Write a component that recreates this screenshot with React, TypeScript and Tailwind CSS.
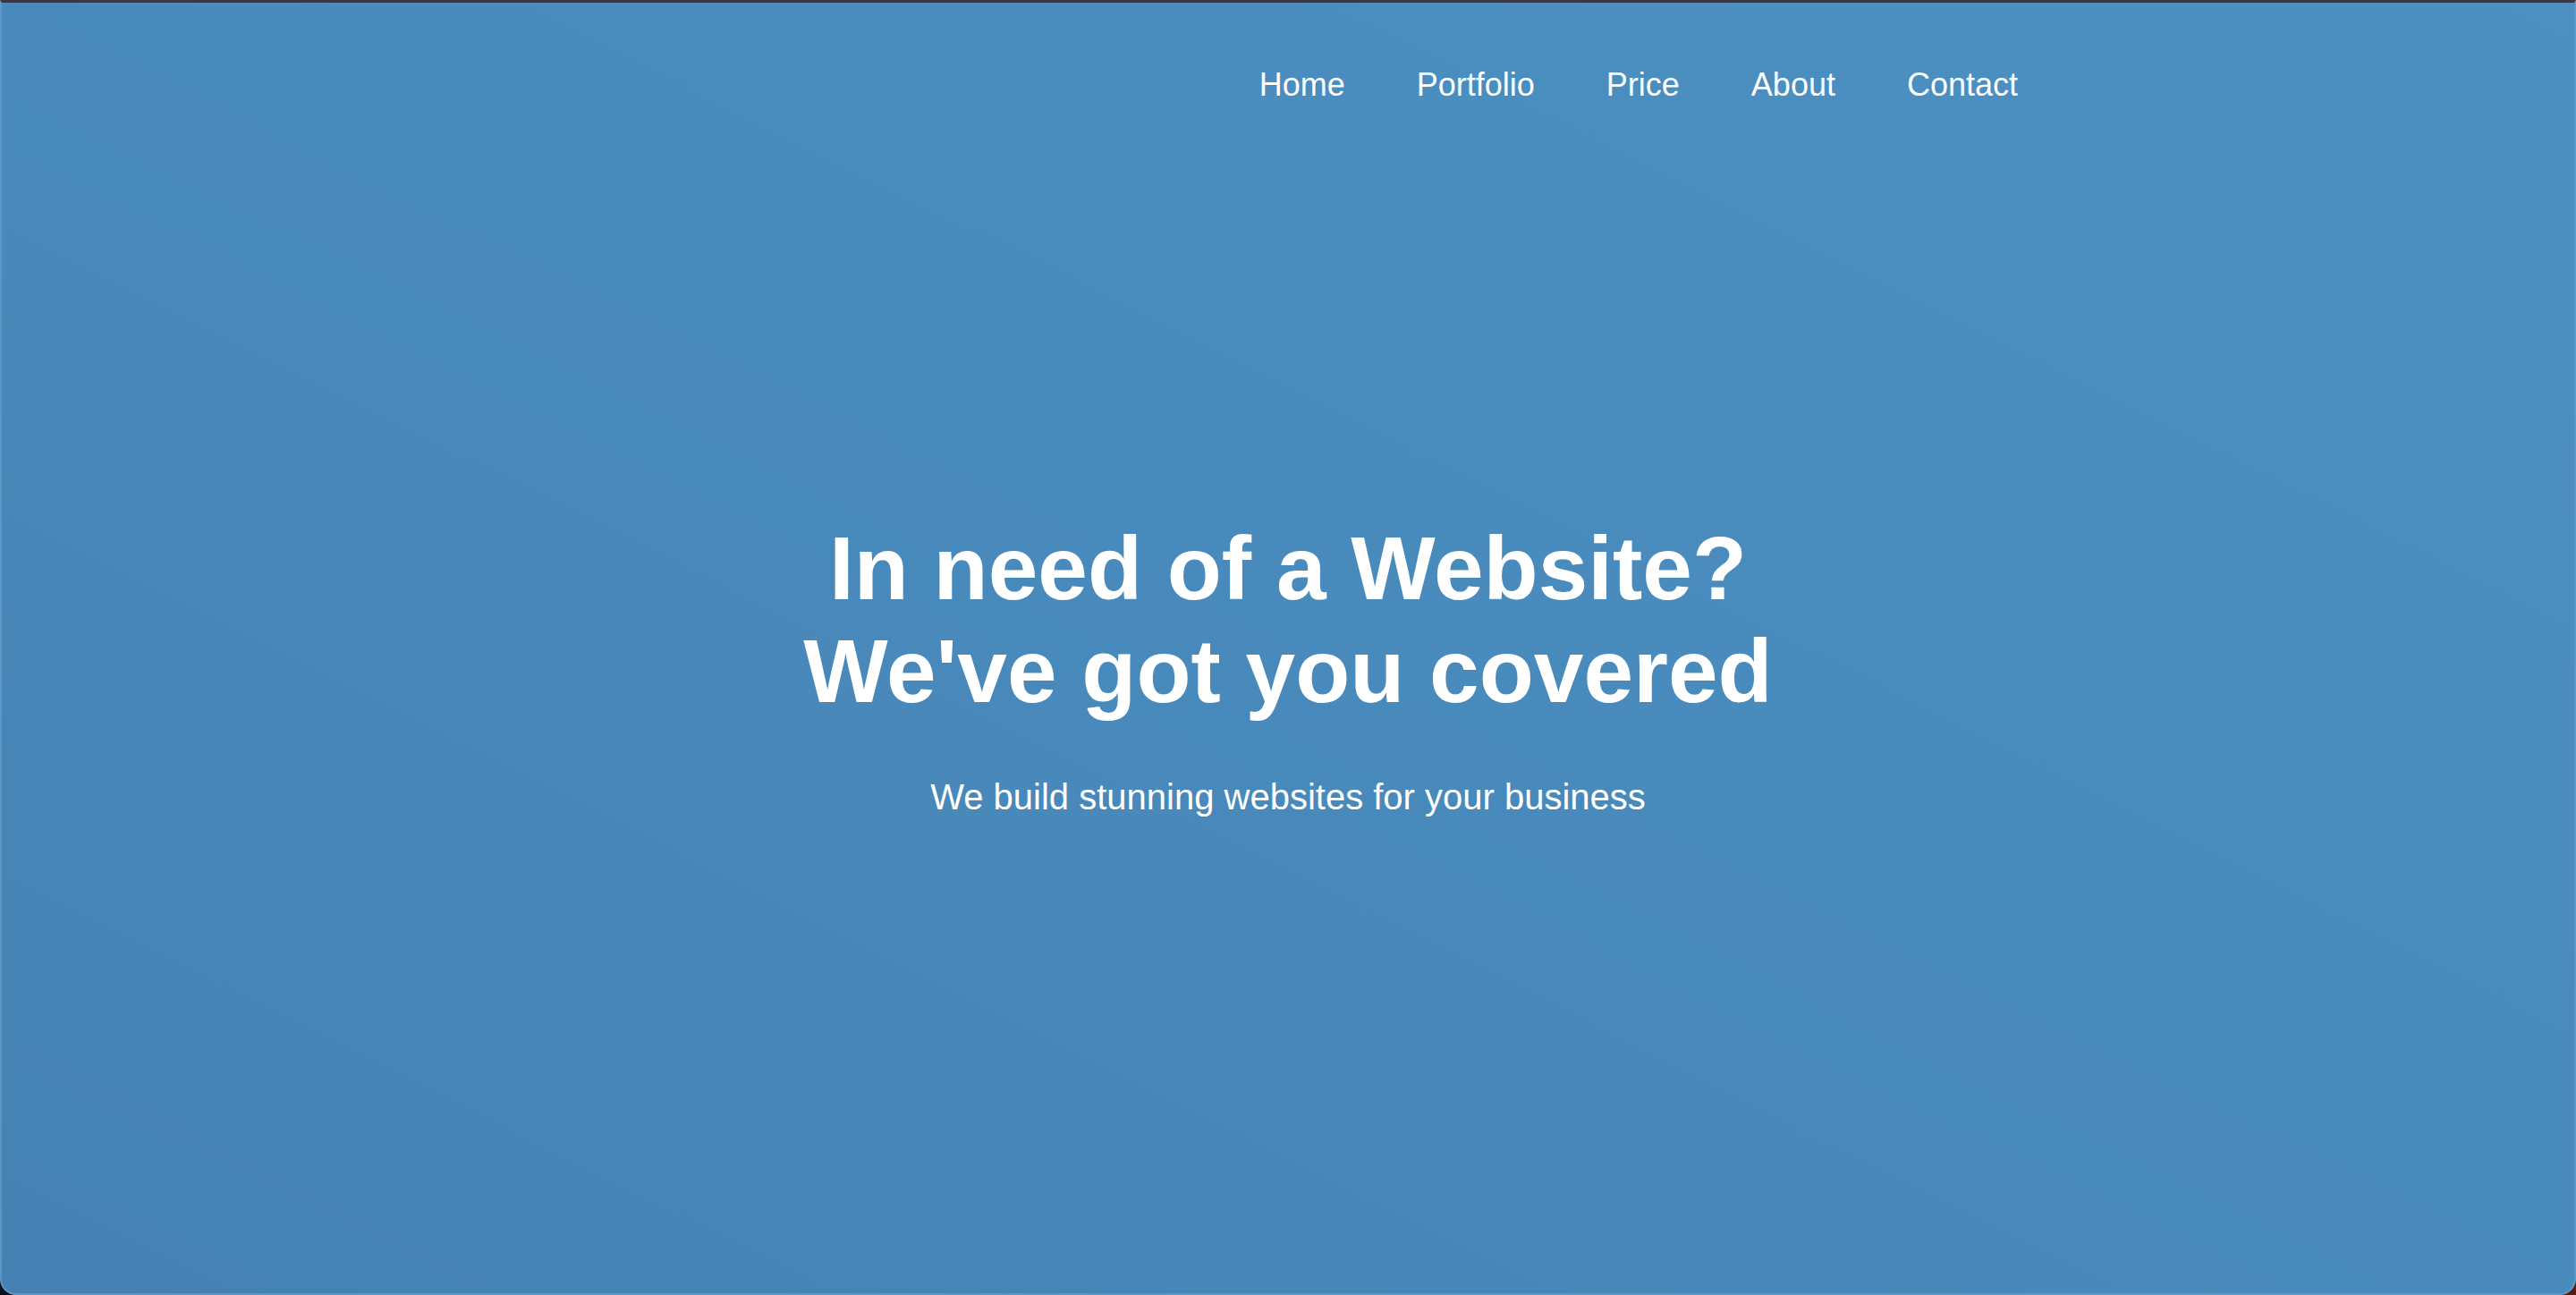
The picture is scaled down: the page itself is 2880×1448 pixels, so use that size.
import React from "react";

const links = ["Home", "Portfolio", "Price", "About", "Contact"];

const App = () => {
  return (
    <div className="w-full h-[1448px] bg-gradient-to-r from-[#08121d] to-[#5a1c10] font-['Liberation_Sans',Arial,sans-serif]">
      {/* window */}
      <div className="h-[1448px] flex flex-col rounded-b-[18px] bg-gradient-to-tr from-[#4582b3] via-[#498abc] to-[#4c90c2] border-t-[3px] border-t-[#363847] border-x-2 border-b-2 border-x-[#5e97c6] border-b-[#5e97c6]">
        {/* nav */}
        <div className="w-[1632px] mx-auto flex justify-end gap-[80px] pt-[71px]">
          {links.map((l) => (
            <a key={l} href="#" className="text-white text-[36px] leading-[41px]">
              {l}
            </a>
          ))}
        </div>

        {/* hero */}
        <div className="mt-[463px] flex flex-col items-center text-white text-center">
          <h1 className="text-[100px] leading-[115px] font-bold">
            In need of a Website?
            <br />
            We've got you covered
          </h1>
          <p className="mt-[60px] text-[40px] leading-[46px]">
            We build stunning websites for your business
          </p>
        </div>
      </div>
    </div>
  );
};

export default App;
